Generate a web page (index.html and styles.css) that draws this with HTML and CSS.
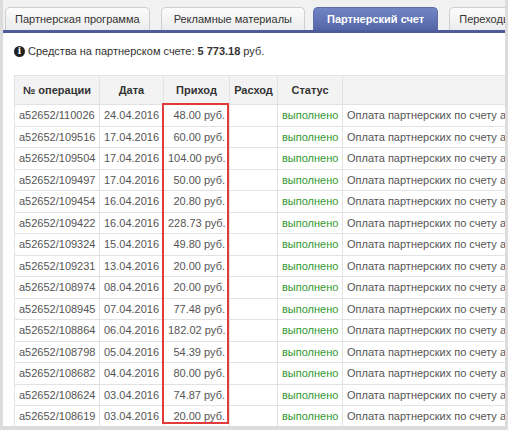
FILE: index.html
```html
<!DOCTYPE html>
<html lang="ru">
<head>
    <meta charset="UTF-8">
    <title>Партнерский счет</title>
    <link rel="stylesheet" href="styles.css">
</head>
<body>
    <div class="window">
        <div class="tabs">
            <div class="tab">Партнерская программа</div>
            <div class="tab wide">Рекламные материалы</div>
            <div class="tab active">Партнерский счет</div>
            <div class="tab">Переходы</div>
        </div>
        <div class="panel">
            <p class="balance">
                <span class="info-icon">i</span>
                Средства на партнерском счете: <b>5 773.18</b> руб.
            </p>
            <div class="table-wrap">
                <table class="ops">
                    <thead>
                        <tr>
                            <th class="c-id">№ операции</th>
                            <th class="c-date">Дата</th>
                            <th class="c-in">Приход</th>
                            <th class="c-out">Расход</th>
                            <th class="c-status">Статус</th>
                            <th class="c-desc"></th>
                        </tr>
                    </thead>
                    <tbody>
                        <tr><td>a52652/110026</td><td>24.04.2016</td><td class="num">48.00 руб.</td><td></td><td class="ok">выполнено</td><td class="desc">Оплата партнерских по счету а52652</td></tr>
                        <tr><td>a52652/109516</td><td>17.04.2016</td><td class="num">60.00 руб.</td><td></td><td class="ok">выполнено</td><td class="desc">Оплата партнерских по счету а52652</td></tr>
                        <tr><td>a52652/109504</td><td>17.04.2016</td><td class="num">104.00 руб.</td><td></td><td class="ok">выполнено</td><td class="desc">Оплата партнерских по счету а52652</td></tr>
                        <tr><td>a52652/109497</td><td>17.04.2016</td><td class="num">50.00 руб.</td><td></td><td class="ok">выполнено</td><td class="desc">Оплата партнерских по счету а52652</td></tr>
                        <tr><td>a52652/109454</td><td>16.04.2016</td><td class="num">20.80 руб.</td><td></td><td class="ok">выполнено</td><td class="desc">Оплата партнерских по счету а52652</td></tr>
                        <tr><td>a52652/109422</td><td>16.04.2016</td><td class="num">228.73 руб.</td><td></td><td class="ok">выполнено</td><td class="desc">Оплата партнерских по счету а52652</td></tr>
                        <tr><td>a52652/109324</td><td>15.04.2016</td><td class="num">49.80 руб.</td><td></td><td class="ok">выполнено</td><td class="desc">Оплата партнерских по счету а52652</td></tr>
                        <tr><td>a52652/109231</td><td>13.04.2016</td><td class="num">20.00 руб.</td><td></td><td class="ok">выполнено</td><td class="desc">Оплата партнерских по счету а52652</td></tr>
                        <tr><td>a52652/108974</td><td>08.04.2016</td><td class="num">20.00 руб.</td><td></td><td class="ok">выполнено</td><td class="desc">Оплата партнерских по счету а52652</td></tr>
                        <tr><td>a52652/108945</td><td>07.04.2016</td><td class="num">77.48 руб.</td><td></td><td class="ok">выполнено</td><td class="desc">Оплата партнерских по счету а52652</td></tr>
                        <tr><td>a52652/108864</td><td>06.04.2016</td><td class="num">182.02 руб.</td><td></td><td class="ok">выполнено</td><td class="desc">Оплата партнерских по счету а52652</td></tr>
                        <tr><td>a52652/108798</td><td>05.04.2016</td><td class="num">54.39 руб.</td><td></td><td class="ok">выполнено</td><td class="desc">Оплата партнерских по счету а52652</td></tr>
                        <tr><td>a52652/108682</td><td>04.04.2016</td><td class="num">80.00 руб.</td><td></td><td class="ok">выполнено</td><td class="desc">Оплата партнерских по счету а52652</td></tr>
                        <tr><td>a52652/108624</td><td>03.04.2016</td><td class="num">74.87 руб.</td><td></td><td class="ok">выполнено</td><td class="desc">Оплата партнерских по счету а52652</td></tr>
                        <tr><td>a52652/108619</td><td>03.04.2016</td><td class="num">20.00 руб.</td><td></td><td class="ok">выполнено</td><td class="desc">Оплата партнерских по счету а52652</td></tr>
                        <tr><td>a52652/108540</td><td>02.04.2016</td><td class="num">36.00 руб.</td><td></td><td class="ok">выполнено</td><td class="desc">Оплата партнерских по счету а52652</td></tr>
                    </tbody>
                </table>
                <!-- highlight around the income column -->
                <div class="highlight"></div>
            </div>
        </div>
    </div>
</body>
</html>
```

FILE: styles.css
```css
/* General styling */
html, body {
    height: 100%;
}

body {
    margin: 0;
    padding: 0 3px 4px 3px;
    box-sizing: border-box;
    background-color: #dcdcdc;
    font-family: 'Liberation Sans', Arial, sans-serif;
    font-size: 11px;
    color: #333;
    overflow: hidden;
}

.window {
    height: 100%;
    background: #f1f1f1;
    display: flex;
    flex-direction: column;
    overflow: hidden;
}

/* Tabs */
.tabs {
    display: flex;
    gap: 11px;
    padding: 7px 0 0 2px;
    border-bottom: 3px solid #4b5b9c;
    white-space: nowrap;
    overflow: hidden;
}

.tab {
    flex: none;
    height: 23px;
    line-height: 23px;
    padding: 0 9px;
    box-sizing: border-box;
    border: 1px solid #cfcfcf;
    border-bottom: none;
    border-radius: 5px 5px 0 0;
    background: linear-gradient(#fbfbfb, #ececec);
    color: #333;
}

.tab.wide {
    padding: 0 12px;
    margin-right: -3px;
}

.tab.active {
    background: linear-gradient(#7184c4, #5466a8);
    border-color: #5b6cab;
    color: #fff;
    font-weight: bold;
    padding: 0 13px;
}

/* Content */
.panel {
    flex: 1;
    background: #fff;
    padding: 0 0 0 11px;
    overflow: hidden;
}

.balance {
    margin: 10px 0 0 0;
    height: 16px;
    line-height: 16px;
    display: flex;
    align-items: center;
    gap: 3px;
    white-space: nowrap;
}

.info-icon {
    display: inline-block;
    width: 11px;
    height: 11px;
    border-radius: 50%;
    background: #222;
    color: #fff;
    font-family: 'DejaVu Serif', serif;
    font-weight: bold;
    font-size: 9px;
    line-height: 11px;
    text-align: center;
}

.table-wrap {
    position: relative;
    margin-top: 16px;
}

.ops {
    border-collapse: collapse;
    table-layout: fixed;
    width: 560px;
    border-top: 1px solid #9aa5c6;
}

.ops th,
.ops td {
    border: 1px solid #e2e2e2;
    padding: 0 4px;
    white-space: nowrap;
    overflow: hidden;
}

.ops th {
    height: 28px;
    background: #f3f3f3;
    font-weight: bold;
    color: #333;
    text-align: center;
}

.ops td {
    height: 20.5px;
    color: #555;
}

.c-id { width: 76px; }
.c-date { width: 55px; }
.c-in { width: 57px; }
.c-out { width: 39px; }
.c-status { width: 56px; }

.ops td.num {
    text-align: right;
}

.ops td.ok {
    color: #33992f;
}

.highlight {
    position: absolute;
    left: 148px;
    top: 28px;
    width: 63px;
    height: 317px;
    border: 2px solid #e23b3b;
}
```
